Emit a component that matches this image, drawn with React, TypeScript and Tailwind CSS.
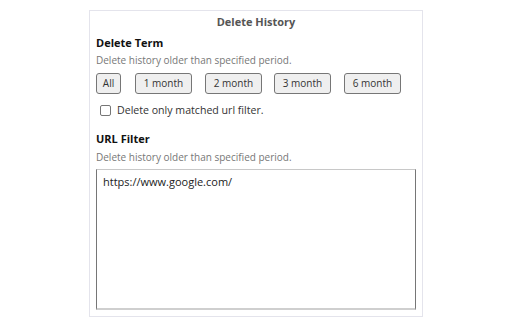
import React from "react";

export default function App() {
  const btn =
    "h-[21px] rounded-[3px] border border-[#767676] bg-[#efefef] text-[10px] text-[#333] flex items-center justify-center";
  return (
    <div
      className="w-[512px] h-[320px] bg-white pt-[10px] pl-[89px]"
      style={{ fontFamily: '"Open Sans", "Liberation Sans", sans-serif' }}
    >
      <div className="w-[334px] h-[307px] border border-[#e4e4ec] px-[6px] flex flex-col">
        <div className="h-[23px] pt-[4px] leading-[14px] text-center text-[11px] font-bold text-[#555]">
          Delete History
        </div>
        <div className="mt-[2px] h-[14px] leading-[14px] text-[11px] font-bold text-[#111]">
          Delete Term
        </div>
        <div className="mt-[3px] h-[14px] leading-[14px] text-[10px] text-[#777]">
          Delete history older than specified period.
        </div>
        <div className="mt-[6px] flex">
          <button className={`${btn} w-[25px]`}>All</button>
          <button className={`${btn} w-[57px] ml-[14px]`}>1 month</button>
          <button className={`${btn} w-[57px] ml-[13px]`}>2 month</button>
          <button className={`${btn} w-[57px] ml-[12px]`}>3 month</button>
          <button className={`${btn} w-[57px] ml-[13px]`}>6 month</button>
        </div>
        <div className="mt-[10px] h-[12px] flex items-center">
          <span className="ml-[4px] w-[11px] h-[11px] rounded-[2px] border border-[#767676] bg-white" />
          <span className="ml-[6px] leading-[12px] text-[10.6px] text-[#333]">
            Delete only matched url filter.
          </span>
        </div>
        <div className="mt-[16px] h-[14px] leading-[14px] text-[11px] font-bold text-[#111]">
          URL Filter
        </div>
        <div className="mt-[4px] h-[14px] leading-[14px] text-[10px] text-[#777]">
          Delete history older than specified period.
        </div>
        <div className="mt-[5px] w-[320px] h-[141px] border-x border-x-[#767676] border-t border-t-[#c8c8c8] border-b-2 border-b-[#cfcfcf] px-[6px] pt-[5px] text-[11px] leading-[14px] text-[#222]">
          https://www.google.com/
        </div>
      </div>
    </div>
  );
}
